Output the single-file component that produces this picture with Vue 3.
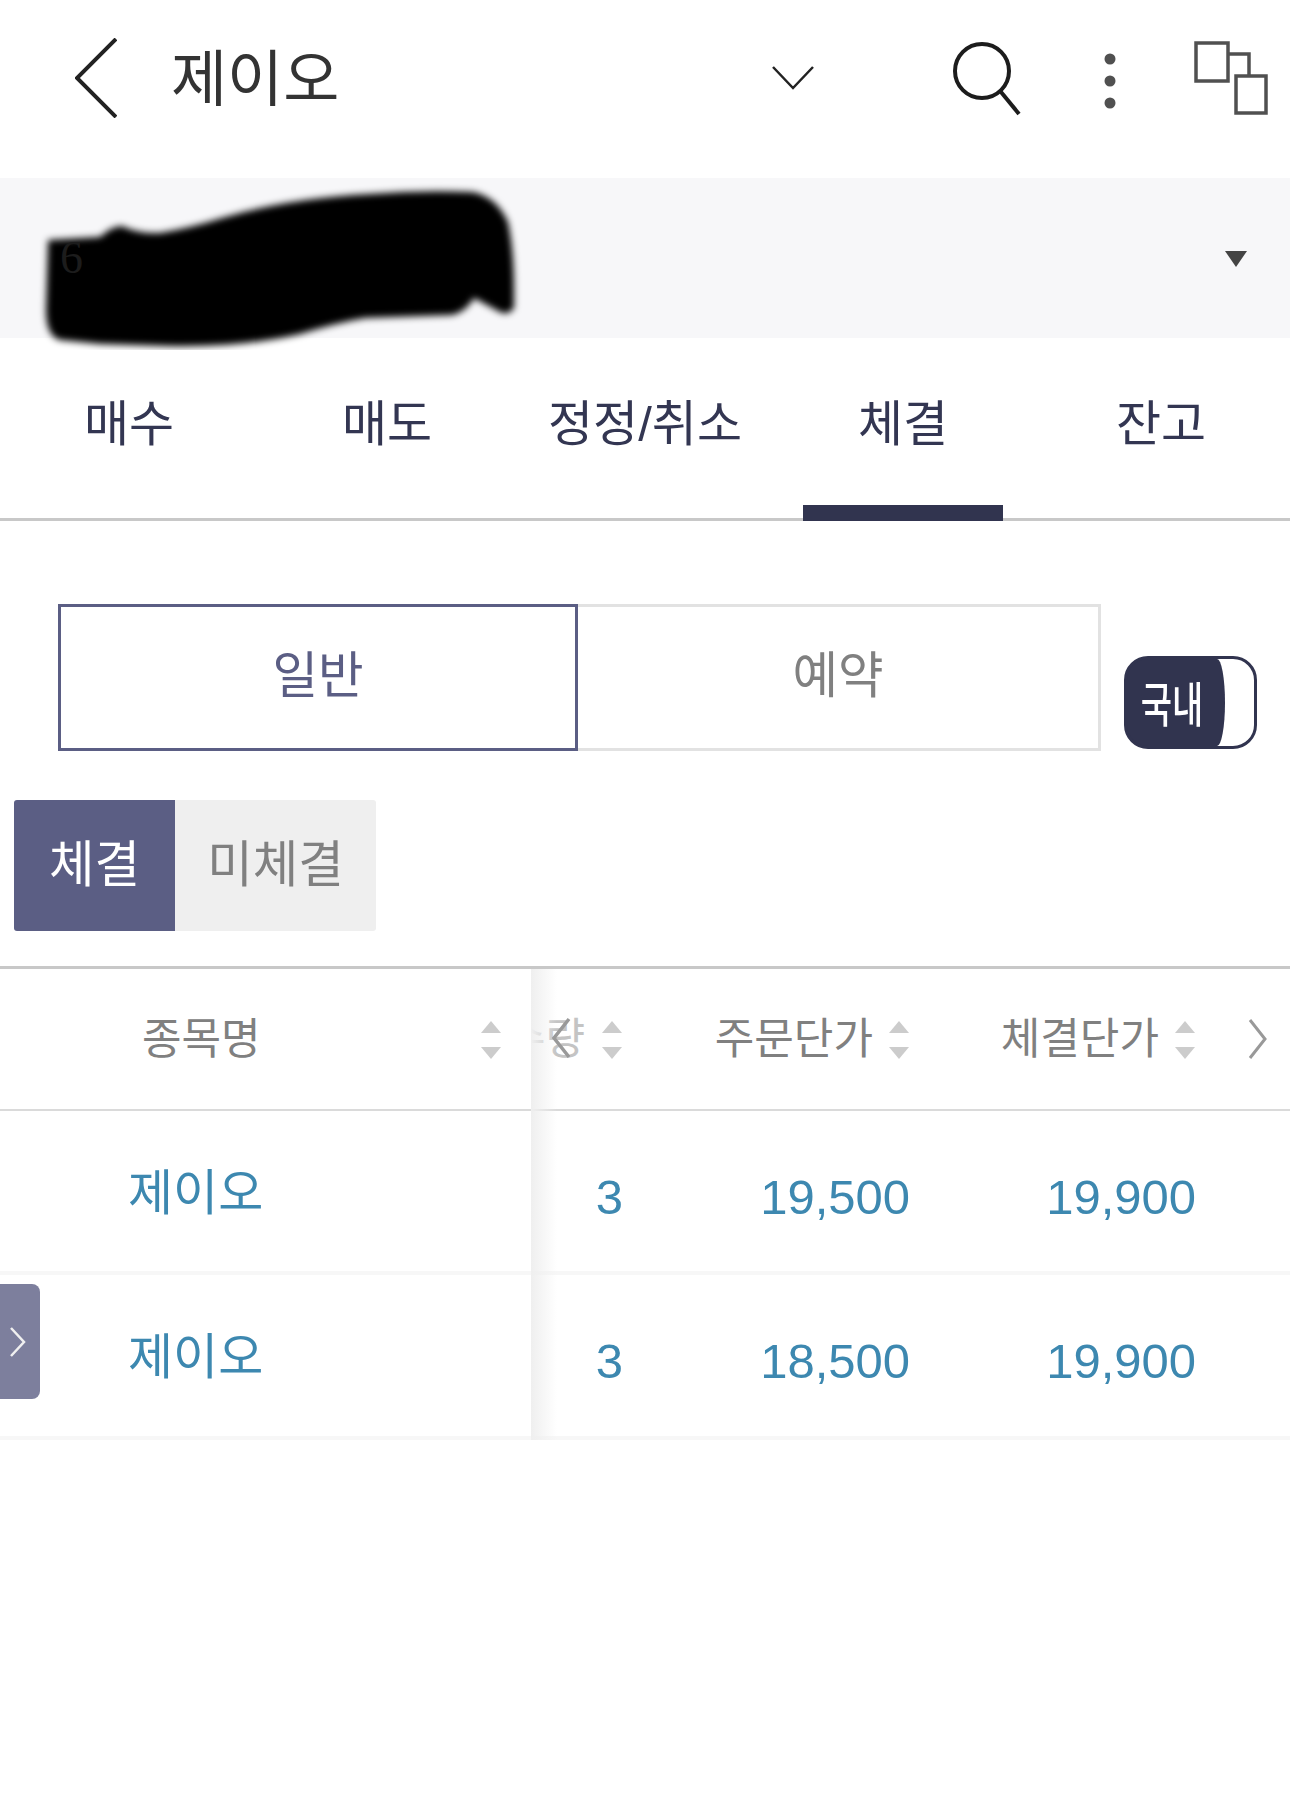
<script setup>
const tabs = [
  { label: '매수' },
  { label: '매도' },
  { label: '정정/취소' },
  { label: '체결', active: true },
  { label: '잔고' },
]
const rows = [
  { name: '제이오', qty: '3', order: '19,500', fill: '19,900' },
  { name: '제이오', qty: '3', order: '18,500', fill: '19,900' },
]
</script>

<template>
  <div class="page">
    <header class="top">
      <svg class="i-back" width="42" height="80" viewBox="0 0 42 80"><path d="M41 1 2 40l39 39" fill="none" stroke="#222" stroke-width="4"/></svg>
      <h1 class="title">제이오</h1>
      <svg class="i-down" width="42" height="24" viewBox="0 0 42 24"><path d="M1 1l20 21L41 1" fill="none" stroke="#222" stroke-width="2.5"/></svg>
      <svg class="i-search" width="68" height="74" viewBox="0 0 68 74"><circle cx="29" cy="29" r="27" fill="none" stroke="#1c1c1c" stroke-width="4"/><path d="M48 50l18 22" fill="none" stroke="#1c1c1c" stroke-width="4"/></svg>
      <svg class="i-dots" width="12" height="56" viewBox="0 0 12 56"><circle cx="6" cy="6" r="5.5" fill="#505050"/><circle cx="6" cy="28" r="5.5" fill="#505050"/><circle cx="6" cy="50" r="5.5" fill="#505050"/></svg>
      <svg class="i-win" width="74" height="74" viewBox="0 0 74 74"><g fill="none" stroke="#505050" stroke-width="3.5"><rect x="2" y="2" width="32" height="38"/><rect x="42" y="35" width="30" height="37"/><path d="M34 13h21v22"/></g></svg>
    </header>

    <section class="account">
      <svg class="blob" width="490" height="170" viewBox="34 180 490 170"><defs><filter id="soft" x="-5%" y="-10%" width="110%" height="120%"><feGaussianBlur stdDeviation="3.5"/></filter></defs><path filter="url(#soft)" fill="#000" d="M48 240L100 237Q112 226 122 226Q138 234 160 233Q190 228 222 218Q290 198 370 194Q420 190 472 192Q496 196 508 222Q514 250 514 290L514 308Q508 316 500 312L474 298Q466 312 452 315L365 318Q340 322 300 334Q240 348 165 346L100 344L60 340Q46 336 46 310Z"/></svg>
      <span class="blob-text">6</span>
      <svg class="caret" width="22" height="16" viewBox="0 0 22 16"><path d="M0 0h22L11 16z" fill="#444"/></svg>
    </section>

    <nav class="tabs">
      <div v-for="t in tabs" :key="t.label" class="tab" :class="{ on: t.active }">
        <template v-for="(p, j) in t.label.split('/')" :key="j"><span v-if="j" class="slash">/</span>{{ p }}</template>
      </div>
    </nav>

    <section class="seg-row">
      <div class="seg seg-on">일반</div>
      <div class="seg seg-off">예약</div>
      <div class="toggle"><div class="toggle-knob"><span>국내</span></div></div>
    </section>

    <section class="sub">
      <div class="sub-btn sub-on">체결</div>
      <div class="sub-btn sub-off">미체결</div>
    </section>

    <section class="table">
      <div class="row head">
        <div class="cell-name head-name">
          <span>종목명</span>
          <span class="sort sort-name"><i class="up"></i><i class="dn"></i></span>
        </div>
        <div class="cell-qty head-qty">
          <span class="qty-text">수량</span>
          <span class="sort"><i class="up"></i><i class="dn"></i></span>
        </div>
        <div class="cell-order head-col">
          <span>주문단가</span>
          <span class="sort"><i class="up"></i><i class="dn"></i></span>
        </div>
        <div class="cell-fill head-col">
          <span>체결단가</span>
          <span class="sort"><i class="up"></i><i class="dn"></i></span>
        </div>
      </div>
      <div v-for="(r, i) in rows" :key="i" class="row body">
        <div class="cell-name name">{{ r.name }}</div>
        <div class="cell-qty num">{{ r.qty }}</div>
        <div class="cell-order num">{{ r.order }}</div>
        <div class="cell-fill num">{{ r.fill }}</div>
      </div>
      <div class="fade"></div>
      <svg class="scroll-l" width="20" height="42" viewBox="0 0 20 42"><path d="M18 2 3 21l15 19" fill="none" stroke="#999" stroke-width="3.5"/></svg>
      <svg class="scroll-r" width="20" height="42" viewBox="0 0 20 42"><path d="M2 2l15 19L2 40" fill="none" stroke="#999" stroke-width="3"/></svg>
      <div class="side">
        <svg width="16" height="30" viewBox="0 0 16 30"><path d="M1 1l13 14L1 29" fill="none" stroke="#f0f0f0" stroke-width="2.5"/></svg>
      </div>
    </section>
  </div>
</template>

<style>
html, body { margin: 0; background: #fff; }
</style>

<style scoped>
.page {
  width: 1290px;
  height: 1802px;
  background: #fff;
  overflow: hidden;
  font-family: "Noto Sans CJK KR", "Liberation Sans", sans-serif;
}
.top {
  height: 178px;
  display: flex;
  align-items: flex-start;
  box-sizing: border-box;
  padding-left: 75px;
}
.i-back { margin-top: 38px; flex: none; }
.title {
  margin: 36px 0 0 54px;
  width: 167px;
  font-size: 61px;
  line-height: 78px;
  font-weight: 400;
  color: #333;
  white-space: nowrap;
  flex: none;
}
.i-down { margin: 66px 0 0 434px; flex: none; }
.i-search { margin: 42px 0 0 139px; flex: none; }
.i-dots { margin: 53px 0 0 83px; flex: none; }
.i-win { margin: 41px 0 0 78px; flex: none; }

.account {
  position: relative;
  height: 160px;
  background: #f7f7f9;
  display: flex;
  align-items: center;
  justify-content: flex-end;
  padding-right: 43px;
}
.blob { position: absolute; left: 34px; top: 2px; z-index: 2; }
.blob-text {
  position: absolute;
  left: 60px;
  top: 52px;
  z-index: 3;
  font-family: "Liberation Serif", serif;
  font-size: 46px;
  line-height: 56px;
  color: #1c1c1c;
}
.caret { margin-top: 2px; }

.tabs {
  display: grid;
  grid-template-columns: repeat(5, 258px);
  height: 183px;
  box-sizing: border-box;
  border-bottom: 3px solid #c8c8c8;
}
.tab {
  position: relative;
  text-align: center;
  font-size: 49px;
  line-height: 62px;
  padding-top: 51px;
  color: #333652;
  white-space: nowrap;
}
.slash { font-family: "Liberation Sans", sans-serif; }
.tab.on::after {
  content: "";
  position: absolute;
  left: 29px;
  bottom: -3px;
  width: 200px;
  height: 16px;
  background: #31344f;
}

.seg-row {
  display: flex;
  align-items: flex-start;
  padding: 83px 0 0 58px;
  height: 279px;
  box-sizing: border-box;
}
.seg {
  height: 147px;
  box-sizing: border-box;
  text-align: center;
  font-size: 49.5px;
  line-height: 62px;
  padding-top: 34px;
}
.seg-on {
  width: 520px;
  border: 3px solid #5b5e84;
  color: #5b5e84;
}
.seg-off {
  width: 523px;
  border: 3px solid #e2e2e2;
  border-left: 0;
  color: #808080;
}
.toggle {
  margin: 52px 0 0 23px;
  width: 133px;
  height: 93px;
  box-sizing: border-box;
  border: 3px solid #31344f;
  border-radius: 24px;
  overflow: hidden;
  background: linear-gradient(90deg, #31344f 50%, #fff 50%);
}
.toggle-knob {
  width: 98px;
  height: 100%;
  background: #31344f;
  border-radius: 0 8px 8px 0 / 0 44px 44px 0;
  display: flex;
  align-items: center;
  justify-content: center;
  color: #fff;
  font-size: 34px;
  font-weight: 500;
}
.toggle-knob span {
  display: block;
  transform: scaleY(1.4);
  margin-top: -2px;
  margin-left: -8px;
}

.sub {
  display: flex;
  padding-left: 14px;
  height: 169px;
  box-sizing: border-box;
  border-bottom: 3px solid #c8c8c8;
}
.sub-btn {
  height: 131px;
  text-align: center;
  font-size: 49.5px;
  line-height: 62px;
  padding-top: 30px;
  box-sizing: border-box;
}
.sub-on {
  width: 161px;
  background: #5b5e84;
  color: #fff;
  border-radius: 3px 0 0 3px;
}
.sub-off {
  width: 201px;
  background: #efefef;
  color: #808080;
  border-radius: 0 3px 3px 0;
}

.table { position: relative; }
.row {
  display: grid;
  grid-template-columns: 531px 92px 287px 286px 94px;
  box-sizing: border-box;
}
.head {
  height: 142px;
  border-bottom: 2px solid #dadada;
  font-size: 43px;
  line-height: 56px;
  color: #808080;
  overflow: hidden;
}
.head > div {
  display: flex;
  justify-content: flex-end;
  align-items: flex-start;
  padding-top: 38px;
  white-space: nowrap;
  box-sizing: border-box;
}
.head-name { padding-left: 142px; justify-content: flex-start !important; overflow: hidden; }
.sort-name { margin-left: auto; margin-right: 29px; }
.head-qty { overflow: hidden; }
.qty-text { color: #c4c4c4; margin-right: 16px; }
.head-col > span:first-child { margin-right: 15px; }
.sort {
  display: flex;
  flex-direction: column;
  gap: 14px;
  margin-top: 14px;
  width: 22px;
  align-items: center;
  flex: none;
}
.sort i {
  display: block;
  width: 0;
  height: 0;
  border-left: 10px solid transparent;
  border-right: 10px solid transparent;
}
.sort .up { border-bottom: 12px solid #cccccc; }
.sort .dn { border-top: 12px solid #cccccc; }

.body {
  height: 164px;
  border-bottom: 4px solid #f7f7f7;
  color: #3d88b0;
}
.body + .body { height: 165px; }
.name {
  font-size: 49px;
  line-height: 62px;
  padding: 47px 0 0 128px;
}
.num {
  font-family: "Liberation Sans", sans-serif;
  font-size: 49px;
  line-height: 56px;
  padding-top: 58px;
  text-align: right;
}
.fade {
  position: absolute;
  left: 531px;
  top: 0;
  bottom: 0;
  width: 26px;
  background: linear-gradient(90deg, #efefef, rgba(255, 255, 255, 0));
}
.scroll-l { position: absolute; left: 551px; top: 48px; }
.scroll-r { position: absolute; left: 1248px; top: 49px; }
.side {
  position: absolute;
  left: 0;
  top: 315px;
  width: 40px;
  height: 115px;
  background: #7d7f9d;
  border-radius: 0 8px 8px 0;
  display: flex;
  align-items: center;
  padding-left: 10px;
  box-sizing: border-box;
}
</style>
